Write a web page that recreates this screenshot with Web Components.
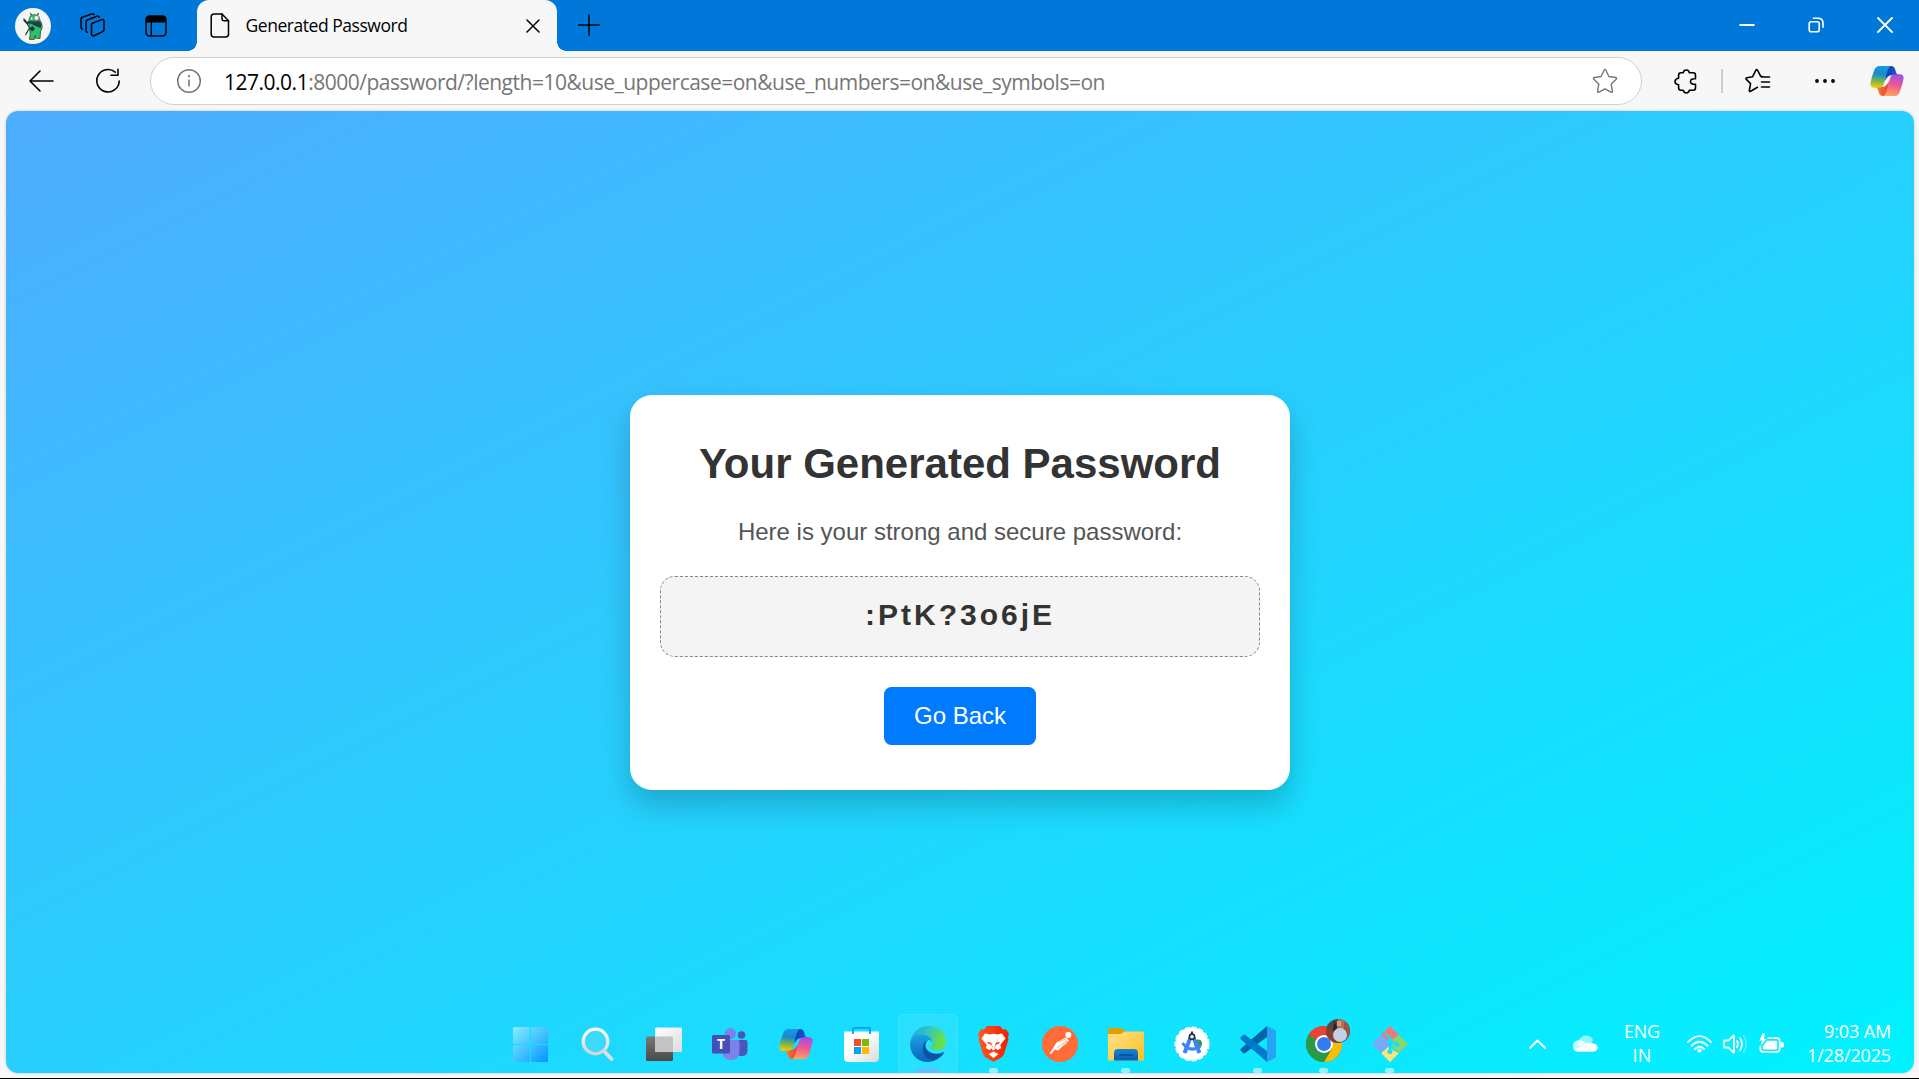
<!DOCTYPE html>
<html lang="en">
<head>
<meta charset="utf-8">
<title>Generated Password</title>
<style>
html,body{margin:0;height:100%;overflow:hidden}
body{font-family:"Open Sans","Noto Sans",sans-serif;background:#f7f7f7}
</style>
</head>
<body>
<desktop-shell></desktop-shell>
<script>
const define = (name, html, ready) => customElements.define(name, class extends HTMLElement {
  connectedCallback() {
    if (this.shadowRoot) return;
    const root = this.attachShadow({ mode: 'open' });
    const t = document.createElement('template');
    t.innerHTML = typeof html === 'function' ? html(this) : html;
    root.append(t.content.cloneNode(true));
    if (ready) ready(this, root);
  }
});

/* Each icon: [width, height, svg body] */
const copilot = p => `
<defs><linearGradient id="${p}a" x1=".4" y1="0" x2=".3" y2="1"><stop offset="0" stop-color="#1599ee"/><stop offset=".35" stop-color="#1689d0"/><stop offset=".65" stop-color="#6cb158"/><stop offset="1" stop-color="#ffcb00"/></linearGradient>
<linearGradient id="${p}b" x1=".6" y1="0" x2=".4" y2="1"><stop offset="0" stop-color="#a14ee8"/><stop offset=".5" stop-color="#ee5a91"/><stop offset="1" stop-color="#ffa45c"/></linearGradient>
<linearGradient id="${p}c"><stop offset="0" stop-color="#0a3fae"/><stop offset="1" stop-color="#2456dd"/></linearGradient>
<linearGradient id="${p}d"><stop offset="0" stop-color="#f6873c"/><stop offset="1" stop-color="#e8432f"/></linearGradient></defs>
<path d="M16 0h5q3 0 4 3l1.300 4q.7 2 3 2h-7q-5 0-7 6z" fill="url(#${p}c)"/>
<path d="M18 30h-5q-3 0-4-3l-1.300-4q-.7-2-3-2h7q5 0 7-6z" fill="url(#${p}d)"/>
<path d="M9.500 0H21q-2.200.5-3.200 4L14 17.500Q12.800 21.800 9 21.800H4.500q-4.800 0-4-4.800 1-6 4-13.500Q6 0 9.500 0z" fill="url(#${p}a)"/>
<path d="M24.500 30H13q2.200-.5 3.200-4L20 12.500Q21.200 8.200 25 8.200h4.500q4.800 0 4 4.800-1 6-4 13.500Q28 30 24.500 30z" fill="url(#${p}b)"/>`;
const S = 'fill="none" stroke="currentColor" stroke-linecap="round" stroke-linejoin="round"';
const ICONS = {
  avatar: [36,36,`<circle cx="18" cy="18" r="18" fill="#f5f5f5"/><path d="M16.500 7.500L15.500 5M22.500 7.500l1-2.500" stroke="#20482f" stroke-width="1.100"/><path d="M9 11l7 11M10.500 27l4-7" stroke="#20482f" stroke-width="1.300"/><path d="M14 13.500q-.5-7 5.300-7t5.700 7z" fill="#35c26a" stroke="#234637" stroke-width=".6"/><path d="M13.500 13h12q2 2.500 1.500 7.500l-1.500 3-.5 7h-4l-.8-3-1 4h-4.700l.7-6 -.8-6z" fill="#2fbf66" stroke="#234637" stroke-width=".8"/><path d="M8.500 10l3.500 3.500h12.500l2 3-1 3.500-4-1.500-6-3-4 .5-3-3z" fill="#1c3f47"/><path d="M14 20l4-2 2 3-3 2.500z" fill="#16363c"/><circle cx="21.500" cy="10" r="2.300" fill="#fff" stroke="#777" stroke-width=".6"/><circle cx="16.600" cy="10.500" r="1" fill="#dff"/><path d="M15 31h3.500M20.500 30.500h3.500" stroke="#96702a" stroke-width="1"/>`],
  collections: [26,26,`<g ${S} stroke-width="1.500"><path d="M12.500 10.200l9.200-3.600q2.300-.8 2.300 1.500v8.400q0 1.500-1.400 2.100l-8 3.900q-3.100 1.200-3.100-2v-8.200q0-1.500 1-2.100z"/><path d="M7.200 19.300q-1.200-.2-1.200-2V9.200q0-1.600 1.400-2.200L17 3.200q1.700-.6 2.200 1"/><path d="M2.500 16.200Q1 15.800 1 14V6.500q0-1.600 1.400-2.200L12 .9q1.400-.4 2 .7"/></g>`],
  tabs: [22,22,`<path d="M1 7.500V4q0-3 3-3h14q3 0 3 3v3.500z"/><rect x="1" y="1" width="20" height="20" rx="3.500" ${S} stroke-width="1.500"/><path d="M6.300 7v14" stroke="currentColor" stroke-width="1.300"/>`],
  page: [20,25,`<path d="M12 1H4Q1.200 1 1.200 4v17q0 3 2.800 3h11.500q3 0 3-3V7.800z" ${S} stroke-width="1.500"/><path d="M12 1v4.500q0 2.300 2.300 2.300h4.200" ${S} stroke-width="1.500"/>`],
  close: [14,14,`<path d="M1 1l12 12M13 1L1 13" ${S} stroke-width="1.500"/>`],
  plus: [22,22,`<path d="M11 .7v20.600M.7 11h20.600" ${S} stroke-width="1.400"/>`],
  min: [16,16,`<path d="M.5 8h15" stroke="currentColor" stroke-width="2"/>`],
  restore: [16,16,`<rect x="1.200" y="4.800" width="10" height="10" rx="2" ${S} stroke-width="1.600"/><path d="M5.500 1.200h4.500q5 0 5 5v4" ${S} stroke-width="1.600"/>`],
  wclose: [16,16,`<path d="M1 1l14 14M15 1L1 15" ${S} stroke-width="1.800"/>`],
  back: [25,22,`<path d="M24 11H1M11 1L1 11l10 10" ${S} stroke-width="1.600"/>`],
  reload: [26,26,`<path d="M20.200 4.200A11.200 11.200 0 1 0 24.200 13M23 1.200v6h-7" ${S} stroke-width="1.600"/>`],
  info: [26,26,`<circle cx="13" cy="13" r="11.300" ${S} stroke-width="1.500"/><path d="M13 11.500v7" stroke="currentColor" stroke-width="1.600"/><circle cx="13" cy="8.200" r="1.100" fill="currentColor"/>`],
  star: [26,26,`<path d="M12.100 2.200q.9-1.500 1.800 0l3 6.300 6.800 1q1.500.4.500 1.700l-5 4.900 1.200 7q.1 1.600-1.400 1l-6-3.300-6 3.300q-1.500.6-1.400-1l1.200-7-5-4.900q-1-1.300.5-1.700l6.800-1z" ${S} stroke-width="1.400"/>`],
  puzzle: [23,25,`<path d="M7 3.800h2.200Q9.700 1 12.300 1t3.100 2.800h3.700q2.400 0 2.400 2.400v3.500Q16.500 9.500 16.500 12.500t5 2.800v3.500q0 2.400-2.400 2.400h-3.700q-.5 2.800-3.100 2.800t-3.100-2.800H7q-2.400 0-2.400-2.400v-3Q1 15.200 1 12.500t3.600-3.300v-3Q4.600 3.800 7 3.800z" ${S} stroke-width="1.600"/>`],
  favs: [26,26,`<path d="M12.500 19.300l-6.900 4q-1.500.6-1.300-.8l1.300-6.900-4.300-4.200q-1-1.300.5-1.600l5.700-1 3.300-6.400q.9-1.700 1.800 0l3 5.800 1.600.4M16.500 9h8M16.500 14h8M16.500 19h8" ${S} stroke-width="1.600"/>`],
  dots: [22,6,`<circle cx="3" cy="3" r="1.900"/><circle cx="11" cy="3" r="1.900"/><circle cx="19" cy="3" r="1.900"/>`],
  copilot: [34,30,copilot('c')],
  start: [35,35,`<defs><linearGradient id="s" gradientUnits="userSpaceOnUse" x1="0" y1="0" x2="33" y2="35"><stop offset="0" stop-color="#83f0ff"/><stop offset="1" stop-color="#0a96ff"/></linearGradient></defs><path fill="url(#s)" d="M1 0h15.800v16.800H0V1zM18.200 0H34l1 1v15.800H18.200zM0 18.200h16.800V35H1l-1-1zM18.200 18.200H35V34l-1 1H18.200z"/>`],
  search: [33,35,`<defs><linearGradient id="g" x2="0" y2="1"><stop offset="0" stop-color="#fff"/><stop offset="1" stop-color="#d2d6da"/></linearGradient></defs><path d="M23 24l7.500 8" stroke="#dcdfe2" stroke-width="4" stroke-linecap="round"/><circle cx="14.500" cy="14.500" r="12.300" fill="#62dcf8" fill-opacity=".45" stroke="url(#g)" stroke-width="3.300"/>`],
  taskview: [36,35,`<defs><linearGradient id="k" x2="0" y2="1"><stop offset="0" stop-color="#777"/><stop offset="1" stop-color="#4a4a4a"/></linearGradient><linearGradient id="w" x2="1" y2="1"><stop offset="0" stop-color="#fff"/><stop offset="1" stop-color="#ddd"/></linearGradient></defs><rect y="9.500" width="27" height="24.500" rx="1.500" fill="url(#k)"/><rect x="9" y=".5" width="27" height="24.500" rx="1.500" fill="url(#w)"/><path d="M9 9.500h17q1 0 1 1V25H10q-1 0-1-1z" fill="#c3c3c3"/>`],
  teams: [36,34,`<circle cx="29.500" cy="8" r="3.800" fill="#4b53bc"/><path d="M22 13h11.500q2 0 2 2v8q0 6-6 6T22 23z" fill="#4b53bc"/><circle cx="18.500" cy="6.500" r="5.500" fill="#7b83eb"/><path d="M11 13h14.500q2 0 2 2v9q0 9-8.500 9T10 24z" fill="#7b83eb"/><rect y="8" width="18" height="18.500" rx="1.500" fill="#464eb8"/><text x="9" y="22" text-anchor="middle" font-family="Open Sans" font-weight="700" font-size="14" fill="#fff">T</text>`],
  store: [35,35,`<defs><linearGradient id="t" x2="1" y2="1"><stop offset=".4" stop-color="#fff"/><stop offset="1" stop-color="#d6d8da"/></linearGradient></defs><path d="M0 4.500h35V31q0 4-4 4H4q-4 0-4-4z" fill="url(#t)"/><path d="M9 7V2q0-1.200 1.200-1.200h14.600Q26 .800 26 2v5" fill="none" stroke="#0c9ee8" stroke-width="1.800"/><path d="M10 12h7v7h-7z" fill="#f25022"/><path d="M18 12h7v7h-7z" fill="#7fba00"/><path d="M10 20h7v7h-7z" fill="#00a4ef"/><path d="M18 20h7v7h-7z" fill="#ffb900"/>`],
  edge: [36,36,`<defs><linearGradient id="e1" x2="1" y2=".3"><stop offset="0" stop-color="#239fd8"/><stop offset=".5" stop-color="#2fc6c5"/><stop offset="1" stop-color="#6ae042"/></linearGradient><linearGradient id="e2" x2="0" y2="1"><stop offset="0" stop-color="#1ba4e4"/><stop offset="1" stop-color="#0a63bd"/></linearGradient></defs><path d="M0 18C1 7 9 0 18.500 0 29 0 36 7.500 36 15.500c0 5.500-4 8.800-9 8.800-4 0-6.500-1.300-6.500-2.800 0-1.200 1.700-1.800 1.700-4.500C22.200 13 18 9 12 9 5 9 1 14 0 18z" fill="url(#e1)"/><path d="M0 18C.8 12 5 8.500 12 8.500c6 0 10 4 10.200 7.500-1-1.400-2.700-2-4.200-2-4 0-7 6-4 12 3 6.500 10 7.500 13 7-3 2-6 3-9 3C7 36 0 28 0 18z" fill="url(#e2)"/><path d="M18 14c-4.500 1-6.500 6-5 11.500C14.500 31 19 34.500 24 34.500 29 33 32 30 33.800 27q.4-1.200-.8-.8-8 3.500-14-.7C14.500 22.500 14.500 17 18 14z" fill="#0c53a3"/>`],
  brave: [31,36,`<defs><linearGradient id="b"><stop offset="0" stop-color="#ff5a22"/><stop offset="1" stop-color="#f51d00"/></linearGradient></defs><path d="M9 0h13l3 3.500 3-.3L31 8l-1 3 .3 3-4.300 14q-.7 2-2.300 3.200L17 35q-1.500 1.300-3 0l-6.700-3.800Q5.700 30 5 28L.7 14 1 11 0 8l3-4.800 3 .3z" fill="url(#b)"/><path d="M7 7.500l5 1q3.500-1.500 7 0l5-1 3.500 5-5.300 6.500 1 3-3.500 2-3-2 .8-3 3.500-1.500 1-1.500-4 .5-1.500 4 .5 3-1.500 1-1.500-1 .5-3-1.500-4-4-.5 1 1.500 3.500 1.500.8 3-3 2-3.500-2 1-3-5.300-6.500zM15.500 25.500l5 2.500-5 4-5-4z" fill="#fff"/>`],
  postman: [36,36,`<circle cx="18" cy="18" r="18" fill="#ff6c37"/><circle cx="26.300" cy="9" r="3" fill="#fff"/><path d="M24 11.500l3 3-11 10-3-1-4 4.500-1.300-.6L13 19l2-3z" fill="#fff"/><path d="M16 16l8-3M15 22l9-7M21 19l4 0-1-5" stroke="#ff9b76" stroke-width=".8" fill="none"/>`],
  files: [36,35,`<defs><linearGradient id="f" x2="1" y2="1"><stop offset="0" stop-color="#ffe08b"/><stop offset="1" stop-color="#ffc21c"/></linearGradient><linearGradient id="h" x2="0" y2="1"><stop offset="0" stop-color="#1587d9"/><stop offset="1" stop-color="#0b5cab"/></linearGradient></defs><path d="M0 3q0-2 2-2h10q1.500 0 2.500 1L18 5v8H0z" fill="#e0a000"/><path d="M0 7h12q1.500 0 3-1.500L17 4.500h17.500q1.500 0 1.500 1.500v26q0 1.500-1.500 1.500H1.500Q0 33.500 0 32z" fill="url(#f)"/><path d="M6 33.500V26q0-4 4-4h16q4 0 4 4v7.500z" fill="url(#h)"/><path d="M11 28h14" stroke="#084c92" stroke-width="1.400"/>`],
  studio: [36,36,`<circle cx="18" cy="18" r="16.500" fill="#fff" stroke="#fff" stroke-width="2" stroke-dasharray="5 2"/><circle cx="24" cy="17.500" r="4" fill="#2d9c57"/><path d="M16.500 11.500L10.500 27M19.500 11.500l6 15.500" stroke="#3f83f4" stroke-width="4"/><path d="M8.500 17q7.500 10.500 18 3" fill="none" stroke="#3f83f4" stroke-width="3"/><circle cx="18" cy="10.700" r="2.600" fill="#fff" stroke="#263238" stroke-width="1.600"/><path d="M18 5.500v3" stroke="#263238" stroke-width="2"/>`],
  vscode: [36,36,`<path d="M27 0L1 22.500q-1.300 1.300 0 2.600l2 2q1 .8 2.200 0L27 11z" fill="#0065a9"/><path d="M27 36L1 13.500q-1.300-1.300 0-2.600l2-2q1-.8 2.200 0L27 25z" fill="#007acc"/><path d="M26 .5Q27 0 28 .5l7 3.300q1 .5 1 1.600v25.200q0 1.100-1 1.600l-7 3.300q-1 .5-2 0 1 0 1-1.500V2q0-1.500-1-1.500z" fill="#27a3f4"/>`],
  chrome: [44,43,`<g transform="translate(0 7)"><circle cx="18" cy="18" r="18" fill="#34a853"/><path d="M18 18L2.400 9A18 18 0 0 1 33.600 9z" fill="#ea4335"/><path d="M18 18l15.600-9A18 18 0 0 1 18 36l7.800-13.500z" fill="#fbbc04"/><path d="M18 18L2.400 9A18 18 0 0 0 18 36l7.800-13.500z" fill="#2b9a48"/><circle cx="18" cy="18" r="9" fill="#fff"/><circle cx="18" cy="18" r="7" fill="#367bed"/></g><clipPath id="pc"><circle cx="32" cy="12" r="12"/></clipPath><g clip-path="url(#pc)"><path d="M20 0h24v24H20z" fill="#5a4942"/><path d="M32 0h7l-1 13h-7z" fill="#b67058"/><path d="M20 8l7 4 2 12h-9z" fill="#87402e"/><path d="M38 3h6v20h-5z" fill="#985747"/><circle cx="34" cy="16" r="7" fill="#c4cfe1"/><path d="M28 0l3 9-4 4z" fill="#1c2a30"/><path d="M31 2h4v5h-4z" fill="#d99b7f"/></g>`],
  git: [36,36,`<path d="M18 0l8.500 8.500-5 5-3.500-2-3 3-5.500-5.500z" fill="#f57677"/><path d="M9 5.500l3.500 4 4 1-1 4-3-1z" fill="#f57677"/><path d="M9 9l8 8.500-1 3 1 1-8 5.500-9-9z" fill="#7ba7ff"/><path d="M27 9l9 9-9 9-6-6-1-7z" fill="#8cd66c"/><path d="M18 36l-9-9 8-6.500 10 6.500z" fill="#ffe37b"/><path d="M13 7l5 5v13M18 14l6 5" stroke="#12dfff" stroke-width="2" fill="none"/><circle cx="18" cy="15" r="2.300" fill="#12dfff"/><circle cx="18" cy="25.500" r="2.500" fill="#12dfff"/><circle cx="25" cy="18.500" r="2.300" fill="#12dfff"/><path d="M9 9l9 9-9 9M27 27l-9-5" stroke="#12dfff" stroke-width="1" fill="none"/>`],
  chevron: [17,10,`<path d="M1.200 8.800l7.300-7.300 7.300 7.300" ${S} stroke-width="2"/>`],
  cloud: [25,17,`<path d="M5 9q0-7.500 7.500-8.500Q18 0 20 5l-3 6H5z" fill="#fff" opacity=".55"/><path d="M0 11.500Q0 5 7 5q4 0 6 3.500h6q5.500 0 5.500 4T20 16.500H5Q0 16.500 0 11.500z" fill="#fff" opacity=".75"/><path d="M2 15l11-6.500q3-1.500 7 0 4.500 1 4.500 4t-4.500 4H5q-2 0-3-1.500z" fill="#fff"/>`],
  wifi: [25,18,`<path d="M1 7.200Q12.500-4.800 24 7.200M4.500 10.700q8-8 16 0M8 14q4.500-4.500 9 0" ${S} stroke-width="1.800"/><circle cx="12.500" cy="15.500" r="2.100" fill="currentColor"/>`],
  speaker: [25,20,`<path d="M1 7.300q0-.8.8-.8h3.700L10 1.800q1-.8 1 .5v15.400q0 1.300-1 .5L5.500 13.500H1.800q-.8 0-.8-.8z" ${S} stroke-width="1.800"/><path d="M14 7q2 3 0 6.500M17 4q4 6 0 12.500" ${S} stroke-width="1.700"/><path d="M20.500 1.500q5.500 8.500 0 17" ${S} stroke-width="1.500" opacity=".3"/>`],
  battery: [25,21,`<path d="M9 5.200h9q2.700 0 2.700 2.700v8.200q0 2.700-2.700 2.700H3.700Q1.300 18.800 1.300 16v-2.500" ${S} stroke-width="1.700"/><path d="M8 7.700h9.200q1 0 1 1v6.800q0 1-1 1H5q-1.200 0-1.200-1v-2z" fill="currentColor"/><path d="M21.500 9h2q1.500 0 1.500 2.800t-1.500 2.800h-2z" fill="currentColor"/><path d="M4 0L.3 7.500H3L1.500 13 7.500 6H5l1-6z" fill="currentColor"/>`]
};

define('ui-icon', el => {
  const [w, h, body] = ICONS[el.getAttribute('name')];
  return `<style>:host{display:block;flex:none;width:${w}px;height:${h}px}svg{display:block;overflow:visible}</style><svg width="${w}" height="${h}" viewBox="0 0 ${w} ${h}" fill="currentColor">${body}</svg>`;
});

/* Single line of text tracked to a given measure */
define('tracked-text', `<style>:host{display:block;white-space:nowrap;flex:none}span{display:inline-block}</style><span><slot></slot></span>`, (el, root) => {
  const span = root.querySelector('span');
  const target = parseFloat(el.getAttribute('measure'));
  span.style.letterSpacing = '0px';
  const gap = (target - span.getBoundingClientRect().width) / el.textContent.trim().length;
  span.style.letterSpacing = gap.toFixed(3) + 'px';
});

define('title-bar', `<style>
:host{display:flex;height:51px;background:#0078d9;color:#000;align-items:center;flex:none}
.left{display:flex;align-items:center;width:196.500px;box-sizing:border-box;padding-left:15px}
.left ui-icon:nth-child(2){margin-left:29px}
.left ui-icon:nth-child(3){margin-left:39px}
.tab{position:relative;display:flex;align-items:center;box-sizing:border-box;width:360.500px;height:51px;background:#f7f7f7;border-radius:12px 12px 0 0;padding:0 17px 0 13.500px}
.tab::before,.tab::after{content:"";position:absolute;bottom:0;width:9px;height:9px}
.tab::before{right:100%;background:radial-gradient(circle at 0 0,transparent 8.500px,#f7f7f7 9px)}
.tab::after{left:100%;background:radial-gradient(circle at 100% 0,transparent 8.500px,#f7f7f7 9px)}
tracked-text{font-size:17.500px;line-height:24px;margin-left:15.500px;padding-bottom:1px;flex:1}
.new{margin:0 0 1px 20.500px}
.win{margin-left:auto;display:flex;gap:53px;color:#fff;padding:0 26px 1px 0}
</style>
<div class="left"><ui-icon name="avatar"></ui-icon><ui-icon name="collections"></ui-icon><ui-icon name="tabs"></ui-icon></div>
<div class="tab"><ui-icon name="page"></ui-icon><tracked-text measure="162">Generated Password</tracked-text><ui-icon name="close"></ui-icon></div>
<ui-icon class="new" name="plus"></ui-icon>
<div class="win"><ui-icon name="min"></ui-icon><ui-icon name="restore"></ui-icon><ui-icon name="wclose"></ui-icon></div>`);

define('address-bar', `<style>
:host{display:flex;flex:none;align-items:center;box-sizing:border-box;height:48px;width:1492px;border:1.500px solid #d0d0d0;border-radius:24px;background:#fff;padding:0 23px 0 25px;color:#767676}
tracked-text{font-size:21px;line-height:30px;margin-left:22px;padding-top:1px;flex:1}
b{font-weight:400;color:#000}
</style><ui-icon name="info"></ui-icon><tracked-text measure="881"><b>127.0.0.1</b>:8000/password/?length=10&amp;use_uppercase=on&amp;use_numbers=on&amp;use_symbols=on</tracked-text><ui-icon name="star"></ui-icon>`);

define('tool-bar', `<style>
:host{display:flex;align-items:center;height:60px;background:#f7f7f7;flex:none;box-sizing:border-box;padding-left:29px}
.back{margin-bottom:1px}
.reload{margin:0 29.500px 0 40.500px}
.puzzle{margin-left:31.500px}
i{width:2px;height:24px;background:#ccc;margin:0 22px 0 24.500px}
.dots{margin:0 34px 0 42.500px}
</style><ui-icon class="back" name="back"></ui-icon><ui-icon class="reload" name="reload"></ui-icon><address-bar></address-bar><ui-icon class="puzzle" name="puzzle"></ui-icon><i></i><ui-icon name="favs"></ui-icon><ui-icon class="dots" name="dots"></ui-icon><ui-icon name="copilot"></ui-icon>`);

define('password-card', `<style>
:host{display:block;box-sizing:border-box;width:660px;padding:45px 30px;border-radius:22px;background:#fff;box-shadow:0 15px 30px rgba(0,0,0,.2);text-align:center;font-family:"Liberation Sans",Arial,sans-serif}
h1{margin:0 0 30px;font-size:42px;line-height:48px;color:#333}
p{margin:0 0 30px;font-size:24px;line-height:28px;color:#555}
.pw{box-sizing:border-box;height:81px;border:1px dashed #888;border-radius:15px;background:#f4f4f4;padding:21px 0;font-weight:700;font-size:30px;line-height:34px;letter-spacing:3px;color:#333;margin-bottom:30px}
a{display:block;width:152px;margin:0 auto;padding:15px 0;border-radius:7.500px;background:#007bff;color:#fff;font-size:24px;line-height:28px}
</style><h1>Your Generated Password</h1><p>Here is your strong and secure password:</p><div class="pw"><slot></slot></div><a>Go Back</a>`);

define('task-item', el => `<style>
:host{position:relative;display:flex;width:66px;height:65px;align-items:center;justify-content:center;flex:none}
.tile{display:flex;box-sizing:border-box;width:60px;height:60px;align-items:center;justify-content:center;border-radius:6px;margin-top:6px}
:host([active]) .tile{background:rgba(255,255,255,.08);box-shadow:inset 0 0 0 1px rgba(255,255,255,.08)}
.mark{position:absolute;bottom:0;left:50%;width:9px;height:5px;margin-left:-4.500px;border-radius:3px;background:rgba(255,255,255,.55)}
:host([active]) .mark{width:24px;margin-left:-12px;background:#58c4ff}
.tile ui-icon{margin-top:1px;${el.getAttribute('icon') === 'chrome' ? 'margin:-6px -8px 0 0' : ''}}
</style><div class="tile"><ui-icon name="${el.getAttribute('icon')}"></ui-icon></div>${el.hasAttribute('open') || el.hasAttribute('active') ? '<div class="mark"></div>' : ''}`);

define('system-tray', `<style>
:host{display:flex;align-items:center;color:#fff;font-size:18px;line-height:24px}
.lang{display:flex;flex-direction:column;align-items:center;margin:0 27px 1px 26px}
.cloud{margin-left:27px}
.speaker{margin:0 11px}
.clock{display:flex;flex-direction:column;align-items:flex-end;margin:0 0 2px 23px}
</style><ui-icon name="chevron"></ui-icon><ui-icon class="cloud" name="cloud"></ui-icon>
<div class="lang"><tracked-text measure="36">ENG</tracked-text><tracked-text measure="19">IN</tracked-text></div>
<ui-icon name="wifi"></ui-icon><ui-icon class="speaker" name="speaker"></ui-icon><ui-icon name="battery"></ui-icon>
<div class="clock"><tracked-text measure="67">9:03 AM</tracked-text><tracked-text measure="84">1/28/2025</tracked-text></div>`);

define('task-bar', `<style>
:host{display:grid;grid-template-columns:1fr auto 1fr;height:65px}
.apps{display:flex;grid-column:2;padding-left:2px}
task-item:first-child{margin:0 1px 0 -1px}
system-tray{justify-self:end;padding-right:28px;height:65px;padding-top:6px;box-sizing:border-box}
</style><div class="apps">
<task-item icon="start"></task-item><task-item icon="search"></task-item><task-item icon="taskview"></task-item><task-item icon="teams"></task-item><task-item icon="copilot"></task-item><task-item icon="store"></task-item><task-item icon="edge" active></task-item><task-item icon="brave" open></task-item><task-item icon="postman"></task-item><task-item icon="files" open></task-item><task-item icon="studio"></task-item><task-item icon="vscode" open></task-item><task-item icon="chrome" open></task-item><task-item icon="git" open></task-item></div><system-tray></system-tray>`);

define('web-page', `<style>
:host{display:flex;flex:1;align-items:center;justify-content:center;margin:0 5px 0 6px;border-radius:12px;background:linear-gradient(to bottom right,#4facfe,#00f2fe);box-shadow:0 0 3px rgba(0,0,0,.22)}
</style><slot></slot>`);

define('desktop-shell', `<style>
:host{position:relative;display:flex;flex-direction:column;box-sizing:border-box;width:1919px;height:1079px;padding-bottom:5px;border-bottom:1px solid #000;background:#f7f7f7;overflow:hidden}
task-bar{position:absolute;left:0;right:0;bottom:5px}
</style><title-bar></title-bar><tool-bar></tool-bar><web-page><password-card>:PtK?3o6jE</password-card></web-page><task-bar></task-bar>`);
</script>
</body>
</html>
